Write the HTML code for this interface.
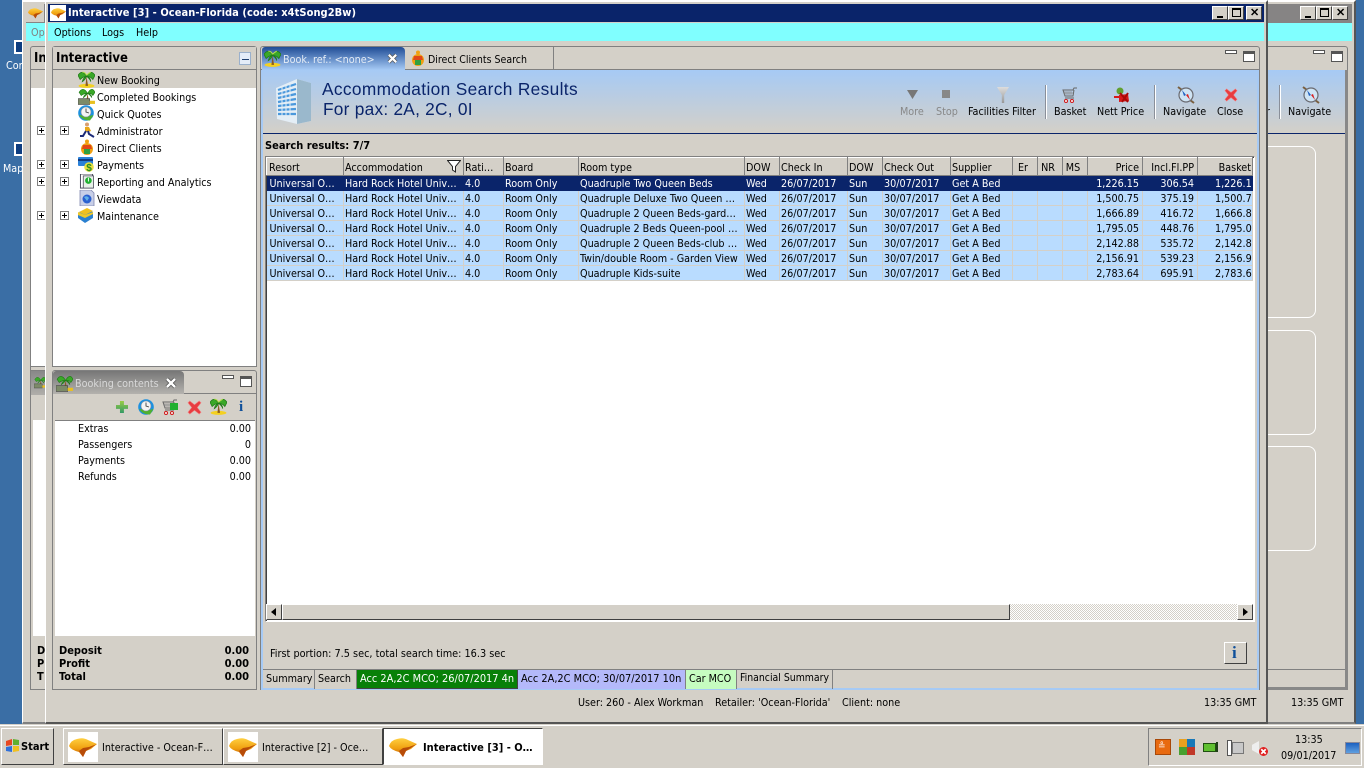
<!DOCTYPE html>
<html><head><meta charset="utf-8"><title>Interactive</title>
<style>
html,body{margin:0;padding:0}
body{width:1364px;height:768px;overflow:hidden;position:relative;background:#3a6ea5;font:10.7px/14px "DejaVu Sans Condensed","DejaVu Sans","Liberation Sans",sans-serif;color:#000}
div,span,svg{position:absolute;box-sizing:border-box}
.t{white-space:nowrap;margin-top:1px}
.b{font-weight:bold;font-size:11px}
.w{background:#d4d0c8}
.p{border:1px solid #808080;border-radius:3px 3px 0 0}
.btn{width:16px;height:14px;background:#d4d0c8;border:1px solid;border-color:#fff #404040 #404040 #fff}
.pm{width:9px;height:9px;border:1px solid #808080;background:#fff}
.pm:before{content:"";position:absolute;left:1px;top:3px;width:5px;height:1px;background:#000}
.pm:after{content:"";position:absolute;left:3px;top:1px;width:1px;height:5px;background:#000}
.min{width:12px;height:4px;border:1px solid #555;background:#fff}
.max{width:12px;height:11px;border:1px solid #555;border-top-width:3px;background:#fff}
table{position:absolute;left:266px;top:157px;border-collapse:collapse;table-layout:fixed;width:986px}
td,th{box-sizing:border-box;padding:0 3px 0 1px;height:15px;font-weight:normal;text-align:left;white-space:nowrap;overflow:hidden;border-right:1px solid #d4d0c8;border-bottom:1px solid #d4d0c8;background:#b9dcff;line-height:13px}
th{height:18px;padding-top:1px;background:#d4d0c8;border:1px solid;border-color:#fff #808080 #808080 #fff}
th:first-child{padding-left:2px}
td:first-child{padding-left:3px}
th.c{text-align:center;padding:1px 4px 0 0}
tr.s td{background:#0a246a;color:#fff;border-color:#0a246a}
.r{text-align:right}
th.r:last-child{padding-right:1px}
td.k{padding-left:17px;padding-right:0}
.tb{height:19px;top:670px;border-right:1px solid #808080;line-height:17px;padding:0 3px;white-space:nowrap}
.sep{width:2px;top:85px;height:34px;background:#8a8f99;border-right:1px solid #fff}
.tk{top:728px;height:37px;border:1px solid;border-color:#fff #404040 #404040 #fff;background:#d4d0c8}
.lg{left:4px;top:3px;width:30px;height:30px;background:#fff}
</style></head><body>
<svg width="0" height="0" style="left:0;top:0"><defs>
<linearGradient id="lgg" x1="0" y1="0" x2="0" y2="1"><stop offset="0" stop-color="#ffd040"/><stop offset=".55" stop-color="#f0a010"/><stop offset="1" stop-color="#b84c08"/></linearGradient>
<symbol id="logo" viewBox="0 0 28 20"><path d="M0 9 Q2 3 8 2 Q14 0 19 3 L28 7 L22 12 L17 14 L14 20 L10 15 Q2 13 0 9Z" fill="url(#lgg)"/><path d="M10 14 L14 20 L17 14 L28 7 L20 10 L14 11Z" fill="#b84c08"/></symbol>
<symbol id="palm" viewBox="0 0 16 17"><ellipse cx="8" cy="15" rx="7.5" ry="1.9" fill="#f4d020"/><path d="M8 6 L9.5 15 L7 15Z" fill="#8a5a20"/><path d="M8 6 Q4 -1 0 5 L2 9 Q5 6 8 6 Q5 7 4 11 Q7 9 8 6 Q11 8 12 11 Q12 7 8 6 Q12 6 14 9 L16 5 Q12 -1 8 6Z" fill="#3aa828" stroke="#1f7a18" stroke-width=".7"/><path d="M4 2 Q7 2 8 5 M12 2 Q10 3 8 5" stroke="#b8e050" fill="none"/></symbol>
<symbol id="palmc" viewBox="0 0 16 17"><path d="M9 6 L10 12 L8 12Z" fill="#8a5a20"/><path d="M9 6 Q5 -1 1 5 L3 8 Q6 6 9 6 Q6 7 5 10 Q8 8 9 6 Q12 8 13 10 Q13 7 9 6 Q13 6 14 8 L16 5 Q13 -1 9 6Z" fill="#3aa828" stroke="#1f7a18" stroke-width=".6"/><rect x="0" y="11" width="11" height="5.5" fill="#7c8a68" stroke="#444" stroke-width=".6"/><rect x="11" y="13" width="5" height="3" fill="#e8c020"/></symbol>
<symbol id="clock" viewBox="0 0 16 16"><circle cx="8" cy="8" r="7.8" fill="#1c90e0"/><path d="M1 10 Q5 16 12 15.5 L15.5 10 L11 11Z" fill="#50b030"/><circle cx="8" cy="7" r="5" fill="#f4f4f4" stroke="#8090a0" stroke-width=".6"/><path d="M8 3.5V7L11 8" fill="none" stroke="#444" stroke-width=".9"/></symbol>
<symbol id="admin" viewBox="0 0 16 16"><circle cx="8" cy="2.5" r="2" fill="#d8a070"/><path d="M6 5 L10 5 L12 9 L9 10 L6 9Z" fill="#e8a818"/><path d="M7 9 L4 14 L1 14 M9 9 L10 12 L15 15" fill="none" stroke="#1c2a78" stroke-width="2"/></symbol>
<symbol id="client" viewBox="0 0 16 16"><circle cx="8" cy="2.5" r="2" fill="#f0a010"/><circle cx="8" cy="10" r="6" fill="#f0a010"/><path d="M4 6 H12 L13 10 H3Z" fill="#e04818"/><path d="M5 10 H11 V15 H5Z" fill="#30a040"/></symbol>
<symbol id="pay" viewBox="0 0 16 16"><rect x="0" y="1" width="15" height="9" rx="1" fill="#2a80d8"/><rect x="0" y="3" width="15" height="2" fill="#103a80"/><circle cx="11" cy="11" r="4.8" fill="#e8e040"/><text x="8.3" y="15" font-size="10" font-weight="bold" fill="#2a8a20" font-family="Liberation Sans">$</text></symbol>
<symbol id="rep" viewBox="0 0 16 16"><rect x="1" y="0" width="13" height="15" fill="#fff" stroke="#445" stroke-width="1"/><rect x="4" y="2" width="11" height="13" fill="#e8f0e8" stroke="#445" stroke-width=".8"/><circle cx="9.5" cy="7" r="3.5" fill="#20b030"/><rect x="9" y="4" width="1" height="4" fill="#fff"/></symbol>
<symbol id="view" viewBox="0 0 16 16"><path d="M1 0H12L15 3V16H1Z" fill="#c8cfe8" stroke="#8088b0" stroke-width=".8"/><circle cx="8" cy="9" r="4.5" fill="#2a60d0"/><path d="M5 7 Q8 5 10 8 L8 11Z" fill="#60b0e8"/></symbol>
<symbol id="maint" viewBox="0 0 16 16"><path d="M0 6 L8 2 L15 5 V11 L7 16 L0 11Z" fill="#2a80d0"/><path d="M1 5 L9 1 L15 4 L7 8Z" fill="#f0c020"/><path d="M0 8 L7 11 L15 7 V5 L7 8 L0 5Z" fill="#f0c828"/></symbol>
<symbol id="close" viewBox="0 0 16 16"><path d="M3 1 L8 5 L13 1 L15 3 L11 8 L15 13 L13 15 L8 11 L3 15 L1 13 L5 8 L1 3Z" fill="#e83c40" stroke="#f08888" stroke-width=".6"/></symbol>
<symbol id="cart" viewBox="0 0 16 16"><path d="M15 1 H12 L11 3 H1 L3 9 H11 L12 3" fill="none" stroke="#666" stroke-width="1"/><path d="M3 4V8M5 4V8M7 4V8M9 4V8M2 6H11" stroke="#888" stroke-width=".7"/><path d="M3 11H12" stroke="#666"/><circle cx="4" cy="14" r="1.5" fill="#fff" stroke="#d01818"/><circle cx="10" cy="14" r="1.5" fill="#fff" stroke="#d01818"/></symbol>
<symbol id="nav" viewBox="0 0 18 18"><path d="M1 1 L5 4 M13 14 L17 17" stroke="#7a6040" stroke-width="2"/><circle cx="9" cy="9" r="7" fill="#cfe4f4" stroke="#6a6a70" stroke-width="1.2"/><path d="M5 4 L9 9 L7 10Z" fill="#2060c0"/><path d="M13 14 L9 9 L11 8Z" fill="#d82020"/></symbol>
<symbol id="nett" viewBox="0 0 16 16"><circle cx="6" cy="4" r="3.5" fill="#60a030"/><path d="M5 8 L14 7 L15 14 L5 15Z M0 9H6V11H0Z" fill="#d81818"/><path d="M6 6L14 15M14 6L8 15" stroke="#a80808" stroke-width="2"/></symbol>
<symbol id="xx" viewBox="0 0 12 12"><path d="M2 2L10 10M10 2L2 10" stroke="#555" stroke-width="4"/><path d="M2 2L10 10M10 2L2 10" stroke="#fff" stroke-width="2.4"/></symbol>
</defs></svg>

<!-- desktop icons -->
<div style="left:14px;top:40px;width:9px;height:14px;background:#fff"></div><div style="left:16px;top:42px;width:7px;height:10px;background:#0d3d80"></div>
<div class="t" style="left:6px;top:58px;color:#fff">Con</div>
<div style="left:14px;top:142px;width:9px;height:14px;background:#fff"></div><div style="left:16px;top:144px;width:7px;height:10px;background:#0d3d80"></div>
<div class="t" style="left:3px;top:161px;color:#fff">Map</div>

<!-- back window -->
<div class="w" style="left:22px;top:0;width:1334px;height:724px;border-left:1px solid #fff;border-top:2px solid #fff;border-right:2px solid #555;border-bottom:2px solid #808080"></div>
<div style="left:26px;top:4px;width:1326px;height:19px;background:#868484"></div>
<div style="left:26px;top:23px;width:1326px;height:18px;background:#80ffff"></div>
<div style="left:26px;top:4px;width:18px;height:18px;background:#d4d0c8"><svg style="left:2px;top:3px" width="15" height="12"><use href="#logo"/></svg></div>
<div class="t" style="left:31px;top:25px;color:#808080">Op</div>
<div class="btn" style="left:1300px;top:6px"><span style="left:4px;top:9px;width:6px;height:2px;background:#000"></span></div>
<div class="btn" style="left:1316px;top:6px"><span style="left:3px;top:1px;width:9px;height:9px;border:1px solid #000;border-top-width:2px"></span></div>
<div class="btn" style="left:1332px;top:6px"><span class="t b" style="left:3px;top:-2px;font-family:'Liberation Sans'">✕</span></div>
<div class="p" style="left:30px;top:46px;width:1318px;height:644px;background:#d4d0c8"></div>
<div class="t b" style="left:34px;top:51px;font-size:13px">In</div>
<div style="left:31px;top:69px;width:15px;height:1px;background:#808080"></div>
<div style="left:31px;top:70px;width:15px;height:296px;background:#fff"></div>
<div style="left:31px;top:70px;width:15px;height:18px;background:#d4d0c8"></div>
<div class="pm" style="left:37px;top:126px"></div><div class="pm" style="left:37px;top:160px"></div><div class="pm" style="left:37px;top:177px"></div><div class="pm" style="left:37px;top:211px"></div>
<div style="left:31px;top:366px;width:15px;height:5px;background:#d4d0c8;border-top:1px solid #808080"></div>
<div style="left:30px;top:370px;width:16px;height:320px;background:#d4d0c8;border:1px solid #808080;border-right:0"></div>
<div style="left:31px;top:371px;width:15px;height:24px;background:linear-gradient(#888,#b0aeaa)"></div>
<svg style="left:34px;top:373px" width="12" height="18"><use href="#palmc"/></svg>
<div style="left:33px;top:420px;width:13px;height:216px;background:#fff"></div>
<div class="t b" style="left:37px;top:643px">D</div><div class="t b" style="left:37px;top:656px">P</div><div class="t b" style="left:37px;top:669px">T</div>
<!-- back window right -->
<div class="t" style="left:1288px;top:695px">&nbsp;13:35 GMT</div>
<div style="left:1268px;top:70px;width:78px;height:64px;background:linear-gradient(#a6caf5,#d4d0c8)"></div>
<div style="left:1268px;top:133px;width:78px;height:1px;background:#0a246a"></div>
<div class="sep" style="left:1279px;background:#8a8f99"></div>
<svg style="left:1302px;top:86px" width="18" height="18"><use href="#nav"/></svg>
<div class="t" style="left:1288px;top:104px">Navigate</div>
<div class="t" style="left:1266px;top:104px">r</div>
<div style="left:1268px;top:146px;width:48px;height:172px;border:1px solid #fff;border-left:0;border-radius:0 8px 8px 0"></div>
<div style="left:1268px;top:330px;width:48px;height:105px;border:1px solid #fff;border-left:0;border-radius:0 8px 8px 0"></div>
<div style="left:1268px;top:446px;width:48px;height:105px;border:1px solid #fff;border-left:0;border-radius:0 8px 8px 0"></div>
<div style="left:1268px;top:669px;width:78px;height:1px;background:#808080"></div>
<div style="left:1268px;top:687px;width:80px;height:3px;background:#888"></div>
<div style="left:1345px;top:70px;width:3px;height:620px;background:#888"></div>
<div class="min" style="left:1313px;top:50px"></div><div class="max" style="left:1331px;top:51px"></div>

<!-- front window -->
<div class="w" style="left:45px;top:0;width:1223px;height:724px;border-left:1px solid #fff;border-right:2px solid #555;border-top:2px solid #fff;border-bottom:2px solid #555"></div>
<div style="left:48px;top:4px;width:1216px;height:18px;background:#0a246a"></div>
<div style="left:48px;top:23px;width:1216px;height:18px;background:#80ffff"></div>
<div style="left:50px;top:5px;width:16px;height:16px;background:#fff"><svg style="left:1px;top:2px" width="15" height="12"><use href="#logo"/></svg></div>
<div class="t b" style="left:68px;top:5px;color:#fff;letter-spacing:.06px">Interactive [3] - Ocean-Florida (code: x4tSong2Bw)</div>
<div class="btn" style="left:1212px;top:6px"><span style="left:4px;top:9px;width:6px;height:2px;background:#000"></span></div>
<div class="btn" style="left:1228px;top:6px"><span style="left:3px;top:1px;width:9px;height:9px;border:1px solid #000;border-top-width:2px"></span></div>
<div class="btn" style="left:1246px;top:6px"><span class="t b" style="left:3px;top:-2px;font-family:'Liberation Sans'">✕</span></div>
<div class="t" style="left:54px;top:25px">Options</div><div class="t" style="left:102px;top:25px">Logs</div><div class="t" style="left:136px;top:25px">Help</div>

<!-- left nav -->
<div class="p" style="left:52px;top:46px;width:205px;height:321px;background:#fff"></div>
<div style="left:53px;top:47px;width:203px;height:23px;background:#d4d0c8;border-bottom:1px solid #808080"></div>
<div class="t b" style="left:56px;top:51px;font-size:13px">Interactive</div>
<div style="left:239px;top:52px;width:12px;height:13px;background:#e4ecf8;border:1px solid #9ab0cc"><span style="left:2px;top:6px;width:7px;height:1px;background:#204070"></span></div>
<div style="left:53px;top:70px;width:203px;height:18px;background:#d4d0c8"></div>
<svg style="left:78px;top:70px" width="17" height="18"><use href="#palm"/></svg><div class="t" style="left:97px;top:73px">New Booking</div>
<svg style="left:78px;top:87px" width="17" height="18"><use href="#palmc"/></svg><div class="t" style="left:97px;top:90px">Completed Bookings</div>
<svg style="left:78px;top:105px" width="16" height="16"><use href="#clock"/></svg><div class="t" style="left:97px;top:107px">Quick Quotes</div>
<div class="pm" style="left:60px;top:126px"></div><svg style="left:79px;top:122px" width="16" height="16"><use href="#admin"/></svg><div class="t" style="left:97px;top:124px">Administrator</div>
<svg style="left:79px;top:139px" width="16" height="16"><use href="#client"/></svg><div class="t" style="left:97px;top:141px">Direct Clients</div>
<div class="pm" style="left:60px;top:160px"></div><svg style="left:78px;top:156px" width="16" height="16"><use href="#pay"/></svg><div class="t" style="left:97px;top:158px">Payments</div>
<div class="pm" style="left:60px;top:177px"></div><svg style="left:79px;top:174px" width="16" height="15"><use href="#rep"/></svg><div class="t" style="left:97px;top:175px">Reporting and Analytics</div>
<svg style="left:79px;top:190px" width="16" height="16"><use href="#view"/></svg><div class="t" style="left:97px;top:192px">Viewdata</div>
<div class="pm" style="left:60px;top:211px"></div><svg style="left:78px;top:207px" width="16" height="16"><use href="#maint"/></svg><div class="t" style="left:97px;top:209px">Maintenance</div>

<!-- booking contents -->
<div class="p" style="left:52px;top:370px;width:205px;height:320px;background:#d4d0c8"></div>
<div style="left:53px;top:371px;width:131px;height:23px;background:linear-gradient(#777,#b4b2ae);border-radius:3px 4px 0 0"></div>
<div style="left:184px;top:393px;width:72px;height:1px;background:#808080"></div>
<svg style="left:56px;top:374px" width="17" height="18"><use href="#palmc"/></svg>
<div class="t" style="left:75px;top:376px;color:#d8d8d8">Booking contents</div>
<svg style="left:165px;top:377px" width="12" height="12"><use href="#xx"/></svg>
<div class="min" style="left:222px;top:375px"></div><div class="max" style="left:240px;top:376px"></div>
<div style="left:55px;top:420px;width:200px;height:216px;background:#fff;border-top:1px solid #808080"></div>
<div style="left:116px;top:401px;width:12px;height:12px;background:linear-gradient(#9c4,#396);clip-path:polygon(33% 0,66% 0,66% 33%,100% 33%,100% 66%,66% 66%,66% 100%,33% 100%,33% 66%,0 66%,0 33%,33% 33%)"></div>
<svg style="left:138px;top:399px" width="16" height="16"><use href="#clock"/></svg>
<svg style="left:162px;top:399px" width="16" height="16"><use href="#cart"/></svg><div style="left:170px;top:403px;width:8px;height:7px;background:#20b030"></div>
<svg style="left:187px;top:400px" width="15" height="15"><use href="#close"/></svg>
<svg style="left:210px;top:397px" width="17" height="18"><use href="#palm"/></svg>
<div class="t b" style="left:239px;top:397px;color:#10509a;font:bold 15px/18px 'Liberation Serif',serif">i</div>
<div class="t" style="left:78px;top:421px">Extras</div><div class="t" style="right:1113px;top:421px">0.00</div>
<div class="t" style="left:78px;top:437px">Passengers</div><div class="t" style="right:1113px;top:437px">0</div>
<div class="t" style="left:78px;top:453px">Payments</div><div class="t" style="right:1113px;top:453px">0.00</div>
<div class="t" style="left:78px;top:469px">Refunds</div><div class="t" style="right:1113px;top:469px">0.00</div>
<div class="t b" style="left:59px;top:643px">Deposit</div><div class="t b" style="right:1115px;top:643px">0.00</div>
<div class="t b" style="left:59px;top:656px">Profit</div><div class="t b" style="right:1115px;top:656px">0.00</div>
<div class="t b" style="left:59px;top:669px">Total</div><div class="t b" style="right:1115px;top:669px">0.00</div>

<!-- main panel -->
<div class="p" style="left:260px;top:46px;width:1000px;height:644px;background:#d4d0c8"></div>
<div style="left:261px;top:69px;width:998px;height:1px;background:#808080"></div>
<div style="left:261px;top:70px;width:2px;height:620px;background:#a6caf5"></div>
<div style="left:1257px;top:70px;width:2px;height:620px;background:#a6caf5"></div>
<div style="left:261px;top:688px;width:998px;height:2px;background:#a6caf5"></div>
<div style="left:262px;top:47px;width:143px;height:23px;background:linear-gradient(#1f4c96,#a6caf5);border-radius:3px 4px 0 0"></div>
<svg style="left:264px;top:49px" width="17" height="18"><use href="#palm"/></svg>
<div class="t" style="left:283px;top:52px;color:#e4ecf6">Book. ref.: &lt;none&gt;</div>
<svg style="left:387px;top:53px" width="11" height="11"><use href="#xx"/></svg>
<div style="left:405px;top:47px;width:149px;height:23px;border-right:1px solid #808080;border-bottom:1px solid #808080"></div>
<svg style="left:410px;top:50px" width="16" height="16"><use href="#client"/></svg>
<div class="t" style="left:428px;top:52px;font-size:10.5px">Direct Clients Search</div>
<div class="min" style="left:1225px;top:50px"></div><div class="max" style="left:1243px;top:51px"></div>

<div style="left:263px;top:70px;width:994px;height:64px;background:linear-gradient(#a6caf5,#d4d0c8);border-bottom:1px solid #0a246a"></div>
<svg style="left:275px;top:77px" width="36" height="48" viewBox="0 0 36 48"><path d="M1 11 L22 2 L36 6 V44 L22 47 L2 42Z" fill="#e4eef6"/><path d="M22 2 L36 6 V44 L22 47Z" fill="#9ab8cc"/><path d="M3 13 L21 7 M3 17 L21 12 M3 21 L21 17 M3 25 L21 22 M3 29 L21 27 M3 33 L21 32 M3 37 L21 37" stroke="#4a98dc" stroke-width="2.2" fill="none"/><path d="M7 9 V42 M11 8 V43 M15 6 V44" stroke="#e4eef6" stroke-width="1"/></svg>
<div class="t" style="left:322px;top:78px;font:17.3px/20px 'Liberation Sans',sans-serif;color:#0a246a;letter-spacing:.36px">Accommodation Search Results</div>
<div class="t" style="left:323px;top:98px;font:17.3px/20px 'Liberation Sans',sans-serif;color:#0a246a;letter-spacing:.25px">For pax: 2A, 2C, 0I</div>
<div style="left:907px;top:90px;width:11px;height:9px;background:#777;clip-path:polygon(0 0,100% 0,50% 100%)"></div>
<div class="t" style="left:900px;top:104px;color:#888">More</div>
<div style="left:942px;top:90px;width:8px;height:8px;background:#888"></div>
<div class="t" style="left:936px;top:104px;color:#888">Stop</div>
<div style="left:997px;top:87px;width:12px;height:16px;background:linear-gradient(#ddd,#999);clip-path:polygon(0 0,100% 0,60% 50%,60% 100%,40% 100%,40% 50%)"></div>
<div class="t" style="left:968px;top:104px">Facilities Filter</div>
<div class="sep" style="left:1045px"></div>
<svg style="left:1062px;top:87px" width="16" height="16"><use href="#cart"/></svg>
<div class="t" style="left:1054px;top:104px">Basket</div>
<svg style="left:1114px;top:87px" width="16" height="16"><use href="#nett"/></svg>
<div class="t" style="left:1097px;top:104px">Nett Price</div>
<div class="sep" style="left:1154px"></div>
<svg style="left:1177px;top:86px" width="18" height="18"><use href="#nav"/></svg>
<div class="t" style="left:1163px;top:104px">Navigate</div>
<svg style="left:1224px;top:88px" width="14" height="14"><use href="#close"/></svg>
<div class="t" style="left:1217px;top:104px">Close</div>

<div class="t b" style="left:265px;top:138px">Search results: 7/7</div>
<div style="left:265px;top:156px;width:990px;height:466px;background:#fff;border:1px solid;border-color:#808080 #fff #fff #808080;box-shadow:inset 1px 1px #404040"></div>
<table><colgroup><col style="width:77px"><col style="width:120px"><col style="width:40px"><col style="width:75px"><col style="width:166px"><col style="width:35px"><col style="width:68px"><col style="width:35px"><col style="width:68px"><col style="width:62px"><col style="width:25px"><col style="width:25px"><col style="width:25px"><col style="width:55px"><col style="width:55px"><col style="width:55px"></colgroup>
<tr><th>Resort</th><th>Accommodation</th><th>Rati…</th><th>Board</th><th>Room type</th><th>DOW</th><th>Check In</th><th>DOW</th><th>Check Out</th><th>Supplier</th><th class="c">Er</th><th class="c">NR</th><th class="c">MS</th><th class="r">Price</th><th class="r">Incl.Fl.PP</th><th class="r">Basket</th></tr>
<tr class="s"><td>Universal O…</td><td>Hard Rock Hotel Univ…</td><td>4.0</td><td>Room Only</td><td>Quadruple Two Queen Beds</td><td>Wed</td><td>26/07/2017</td><td>Sun</td><td>30/07/2017</td><td>Get A Bed</td><td></td><td></td><td></td><td class="r">1,226.15</td><td class="r">306.54</td><td class="k">1,226.15</td></tr>
<tr><td>Universal O…</td><td>Hard Rock Hotel Univ…</td><td>4.0</td><td>Room Only</td><td>Quadruple Deluxe Two Queen …</td><td>Wed</td><td>26/07/2017</td><td>Sun</td><td>30/07/2017</td><td>Get A Bed</td><td></td><td></td><td></td><td class="r">1,500.75</td><td class="r">375.19</td><td class="k">1,500.75</td></tr>
<tr><td>Universal O…</td><td>Hard Rock Hotel Univ…</td><td>4.0</td><td>Room Only</td><td>Quadruple 2 Queen Beds-gard…</td><td>Wed</td><td>26/07/2017</td><td>Sun</td><td>30/07/2017</td><td>Get A Bed</td><td></td><td></td><td></td><td class="r">1,666.89</td><td class="r">416.72</td><td class="k">1,666.89</td></tr>
<tr><td>Universal O…</td><td>Hard Rock Hotel Univ…</td><td>4.0</td><td>Room Only</td><td>Quadruple 2 Beds Queen-pool …</td><td>Wed</td><td>26/07/2017</td><td>Sun</td><td>30/07/2017</td><td>Get A Bed</td><td></td><td></td><td></td><td class="r">1,795.05</td><td class="r">448.76</td><td class="k">1,795.05</td></tr>
<tr><td>Universal O…</td><td>Hard Rock Hotel Univ…</td><td>4.0</td><td>Room Only</td><td>Quadruple 2 Queen Beds-club …</td><td>Wed</td><td>26/07/2017</td><td>Sun</td><td>30/07/2017</td><td>Get A Bed</td><td></td><td></td><td></td><td class="r">2,142.88</td><td class="r">535.72</td><td class="k">2,142.88</td></tr>
<tr><td>Universal O…</td><td>Hard Rock Hotel Univ…</td><td>4.0</td><td>Room Only</td><td>Twin/double Room - Garden View</td><td>Wed</td><td>26/07/2017</td><td>Sun</td><td>30/07/2017</td><td>Get A Bed</td><td></td><td></td><td></td><td class="r">2,156.91</td><td class="r">539.23</td><td class="k">2,156.91</td></tr>
<tr><td>Universal O…</td><td>Hard Rock Hotel Univ…</td><td>4.0</td><td>Room Only</td><td>Quadruple Kids-suite</td><td>Wed</td><td>26/07/2017</td><td>Sun</td><td>30/07/2017</td><td>Get A Bed</td><td></td><td></td><td></td><td class="r">2,783.64</td><td class="r">695.91</td><td class="k">2,783.64</td></tr>
</table>
<svg style="left:447px;top:160px" width="14" height="13" viewBox="0 0 14 13"><path d="M.5 .5H13.5L8.5 6.5V12L5.5 10V6.5Z" fill="#fff" stroke="#222"/></svg>
<!-- scrollbar -->
<div style="left:266px;top:604px;width:987px;height:16px;background:repeating-conic-gradient(#fff 0 25%,#d4d0c8 0 50%) 0 0/2px 2px"></div>
<div class="btn" style="left:266px;top:604px;height:16px"></div>
<div style="left:271px;top:608px;width:5px;height:8px;background:#000;clip-path:polygon(100% 0,100% 100%,0 50%)"></div>
<div class="btn" style="left:282px;top:604px;width:728px;height:16px"></div>
<div class="btn" style="left:1237px;top:604px;height:16px"></div>
<div style="left:1243px;top:608px;width:5px;height:8px;background:#000;clip-path:polygon(0 0,0 100%,100% 50%)"></div>

<div class="t" style="left:270px;top:646px;font-size:10.8px">First portion: 7.5 sec, total search time: 16.3 sec</div>
<div class="btn" style="left:1224px;top:642px;width:23px;height:22px"><span class="t" style="left:7px;top:0;color:#10509a;font:bold 17px/18px 'Liberation Serif',serif">i</span></div>
<div style="left:263px;top:669px;width:994px;height:1px;background:#808080"></div>
<div class="tb" style="left:263px;width:52px">Summary</div>
<div class="tb" style="left:315px;width:42px;background:#d4d0c8">Search</div>
<div class="tb" style="left:357px;width:161px;background:#088008;color:#fff;border-right:1px solid #444;border-bottom:1px solid #444;font-size:10.9px">Acc 2A,2C MCO; 26/07/2017 4n</div>
<div class="tb" style="left:518px;width:168px;background:#b4b9fa;font-size:10.9px">Acc 2A,2C MCO; 30/07/2017 10n</div>
<div class="tb" style="left:686px;width:51px;background:#c6fcc0">Car MCO</div>
<div class="tb" style="left:737px;width:96px;white-space:nowrap;font-size:10.4px">Financial Summary</div>

<div class="t" style="left:578px;top:695px">User: 260 - Alex Workman</div>
<div class="t" style="left:715px;top:695px">Retailer: 'Ocean-Florida'</div>
<div class="t" style="left:842px;top:695px">Client: none</div>
<div class="t" style="left:1204px;top:695px">13:35 GMT</div>

<!-- taskbar -->
<div class="w" style="left:0;top:724px;width:1364px;height:44px;border-top:1px solid #fff"></div>
<div style="left:0;top:724px;width:1364px;height:2px;background:#d4d0c8;border-bottom:1px solid #fff"></div>
<div class="tk" style="left:1px;width:53px"><svg style="left:3px;top:9px" width="15" height="15" viewBox="0 0 15 15"><path d="M1 3 L7 1 V7 L1 8Z" fill="#e84820"/><path d="M8 1 L14 2 V7 L8 7Z" fill="#60b030"/><path d="M1 9 L7 8 V14 L1 13Z" fill="#3070d8"/><path d="M8 8 H14 V13 L8 14Z" fill="#f0c020"/></svg><span class="t b" style="left:19px;top:10px">Start</span></div>
<div class="tk" style="left:63px;width:160px"><span class="lg"><svg style="left:1px;top:5px" width="28" height="20"><use href="#logo"/></svg></span><span class="t" style="left:38px;top:11px">Interactive - Ocean-F…</span></div>
<div class="tk" style="left:223px;width:160px"><span class="lg"><svg style="left:1px;top:5px" width="28" height="20"><use href="#logo"/></svg></span><span class="t" style="left:38px;top:11px">Interactive [2] - Oce…</span></div>
<div class="tk" style="left:383px;width:160px;background:#fff;border-color:#404040 #fff #fff #404040"><svg style="left:5px;top:8px" width="28" height="20"><use href="#logo"/></svg><span class="t b" style="left:39px;top:11px">Interactive [3] - O…</span></div>
<div style="left:1148px;top:728px;width:214px;height:38px;border:1px solid;border-color:#808080 #fff #fff #808080"></div>
<div style="left:1155px;top:739px;width:16px;height:16px;background:#e86a10;border:1px solid #a84808"></div><div class="t" style="left:1158px;top:739px;color:#fff;font-size:10px">≗</div>
<div style="left:1179px;top:739px;width:8px;height:8px;background:#e8a020"></div><div style="left:1187px;top:739px;width:8px;height:8px;background:#1878b8"></div><div style="left:1179px;top:747px;width:8px;height:8px;background:#48a030"></div><div style="left:1187px;top:747px;width:8px;height:8px;background:#c03828"></div>
<div style="left:1203px;top:743px;width:13px;height:9px;background:#60c030;border:1px solid #205010"></div><div style="left:1216px;top:742px;width:2px;height:10px;background:#204018"></div>
<div style="left:1232px;top:742px;width:12px;height:12px;background:#c8c8c8;border:1px solid #777"></div><div style="left:1227px;top:740px;width:5px;height:16px;background:#fff;border:1px solid #555"></div>
<div style="left:1252px;top:741px;width:7px;height:13px;background:#eee;border:0;clip-path:polygon(0 30%,100% 0,100% 100%,0 70%)"></div><svg style="left:1259px;top:747px" width="9" height="9" viewBox="0 0 16 16"><circle cx="8" cy="8" r="8" fill="#e02020"/><path d="M4 4L12 12M12 4L4 12" stroke="#fff" stroke-width="3"/></svg>
<div class="t" style="left:1295px;top:732px">13:35</div>
<div class="t" style="left:1281px;top:748px">09/01/2017</div>
<div style="left:1345px;top:742px;width:15px;height:12px;background:linear-gradient(#1c60c0,#60a0e0);border:1px solid #889"></div>
</body></html>
